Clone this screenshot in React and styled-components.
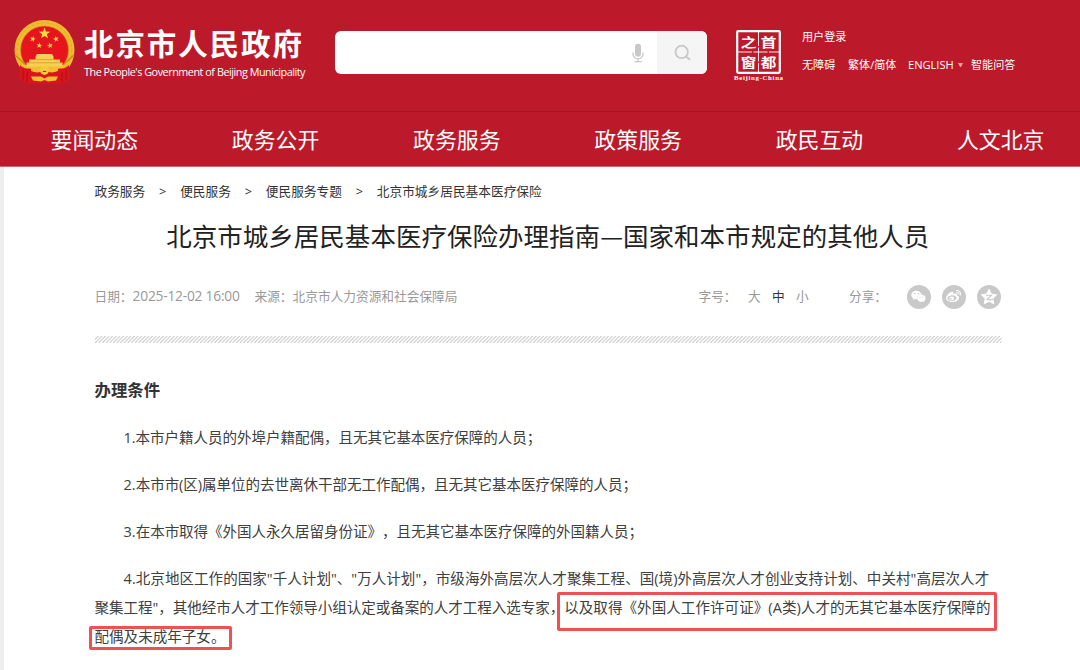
import React from "react";
import styled, { createGlobalStyle } from "styled-components";
import { FaWeixin, FaWeibo } from "react-icons/fa";

const Global = createGlobalStyle`
  * { box-sizing: border-box; }
  body {
    margin: 0;
    background: #fff;
    font-family: "Open Sans", "Noto Sans CJK SC", sans-serif;
    color: #333;
    overflow: hidden;
    text-spacing-trim: space-all;
  }
`;

const Page = styled.div`
  width: 1080px;
  height: 670px;
  overflow: hidden;
  display: flex;
  flex-direction: column;
`;

const Header = styled.header`
  height: 111px;
  background: #bc1a2b;
  display: flex;
  align-items: flex-start;
  padding-left: 14px;
  flex: none;
  color: #fff;
`;

const EmblemSvg = styled.svg`
  width: 61px;
  height: 66px;
  margin-top: 18px;
  flex: none;
`;

const Brand = styled.div`
  width: 260px;
  flex: none;
  padding: 22px 0 0 9px;
  display: flex;
  flex-direction: column;
  white-space: nowrap;
`;

const BrandName = styled.div`
  font: 700 29.5px/40px "Noto Sans CJK SC", sans-serif;
  letter-spacing: 1.9px;
`;

const BrandSub = styled.div`
  margin-top: 2px;
  font-size: 10.8px;
  line-height: 16px;
  letter-spacing: -0.46px;
`;

const SearchBox = styled.div`
  width: 372px;
  height: 43px;
  margin-top: 31px;
  border-radius: 6px;
  background: #fff;
  display: flex;
  justify-content: flex-end;
  align-items: center;
  overflow: hidden;
  flex: none;
`;

const MicIcon = styled.svg`
  width: 12px;
  height: 20px;
  margin-right: 13px;
`;

const SearchButton = styled.div`
  width: 50px;
  height: 43px;
  background: #f5f5f5;
  display: flex;
  align-items: center;
  justify-content: center;
`;

const Stamp = styled.svg`
  width: 52px;
  height: 56px;
  margin: 28px 0 0 26px;
  flex: none;
`;

const Links = styled.div`
  margin: 27px 0 0 17px;
  display: flex;
  flex-direction: column;
  gap: 8px;
`;

const LinkRow = styled.div`
  display: flex;
  height: 20px;
  align-items: center;
`;

const TopLink = styled.span`
  width: ${(p) => p.$w}px;
  font-size: 11.1px;
  line-height: 20px;
  white-space: nowrap;
`;

const Caret = styled.i`
  width: 5px;
  height: 0;
  border: 2.5px solid transparent;
  border-top: 4px solid #e8a58f;
  border-bottom: 0;
  margin-right: 8px;
`;

const Nav = styled.nav`
  height: 56px;
  flex: none;
  background: #bc1a2b;
  border-top: 1px solid #9f1522;
  border-bottom: 1px solid #cf6570;
  display: flex;
  gap: 93.6px;
  padding-left: 50.5px;
`;

const NavItem = styled.span`
  flex: none;
  width: 87.7px;
  color: #fff;
  font: 400 21.9px/54px "Noto Sans CJK SC", sans-serif;
  white-space: nowrap;
`;

const Main = styled.main`
  flex: 1;
  border-left: 4px solid #eee;
  padding: 14px 79px 0 90.5px;
  display: flex;
  flex-direction: column;
`;

const Crumbs = styled.div`
  display: flex;
  height: 20px;
  font-size: 12.7px;
  line-height: 20px;
  white-space: nowrap;
`;

const CrumbSep = styled.span`
  width: 34.9px;
  text-align: center;
`;

const Title = styled.h1`
  margin: 14px 0 0;
  height: 40px;
  text-align: center;
  font: 400 25.5px/40px "Noto Sans CJK SC", sans-serif;
  letter-spacing: 0.03px;
  color: #222;
  white-space: nowrap;
`;

const Meta = styled.div`
  margin-top: 26px;
  height: 30px;
  display: flex;
  align-items: center;
  font-size: 12.7px;
  line-height: 30px;
  color: #999;
  white-space: nowrap;
`;

const MetaItem = styled.span`
  width: ${(p) => p.$w}px;
  height: 30px;
  flex: none;
  color: ${(p) => (p.$on ? "#333" : "#999")};
`;

const DateValue = styled.span`
  font-size: 13.8px;
  letter-spacing: -0.23px;
`;

const Share = styled.span`
  width: 24px;
  height: 24px;
  flex: none;
  margin: 1px 11.3px 0 0;
  border-radius: 50%;
  background: #c9c9c9;
  color: #fff;
  display: flex;
  align-items: center;
  justify-content: center;
`;

const Hatch = styled.svg`
  margin-top: 25px;
  width: 907px;
  height: 7px;
  flex: none;
`;

const Article = styled.article`
  position: relative;
  margin-top: 37px;
  color: #404040;
`;

const Heading = styled.h2`
  margin: 0;
  font-size: 16.4px;
  line-height: 20px;
  font-weight: 700;
  color: #333;
`;

const Para = styled.p`
  margin: ${(p) => p.$mt || 18}px 0 0;
`;

const Line = styled.span`
  display: block;
  height: 29.1px;
  font-size: 14.55px;
  line-height: 29.1px;
  white-space: nowrap;
  padding-left: ${(p) => (p.$indent ? 29.1 : 0)}px;
  letter-spacing: ${(p) => p.$ls || 0}px;
`;

const Lead = styled.span`
  letter-spacing: -0.05px;
`;

const Highlight = styled.div`
  position: absolute;
  left: ${(p) => p.$x}px;
  top: ${(p) => p.$y}px;
  width: ${(p) => p.$w}px;
  height: ${(p) => p.$h}px;
  border: ${(p) => p.$b}px solid #f05053;
  border-radius: 2px;
`;

function star(cx, cy, r, rot = 0, k = 0.4) {
  const pts = [];
  for (let i = 0; i < 10; i++) {
    const a = ((rot - 90 + i * 36) * Math.PI) / 180;
    const q = i % 2 ? r * k : r;
    pts.push(`${(cx + q * Math.cos(a)).toFixed(2)},${(cy + q * Math.sin(a)).toFixed(2)}`);
  }
  return pts.join(" ");
}

function Emblem() {
  return (
    <EmblemSvg viewBox="0 0 61 66">
      <circle cx="30.5" cy="32" r="30" fill="#efbb30" />
      <circle cx="30.5" cy="32" r="27.3" fill="none" stroke="#dda526" strokeWidth=".8" strokeDasharray="3 2" />
      <circle cx="30.5" cy="32" r="24" fill="#e6141c" stroke="#d8961b" strokeWidth=".6" />
      <path d="M10 47h41l-3 8H13z" fill="#f2bf2f" />
      <path d="M1 37l11 10M60 37l-11 10" stroke="#c98618" strokeWidth="1.2" />
      <polygon points={star(30.5, 15.5, 6)} fill="#fbd93f" />
      <polygon points={star(18.8, 21, 3.1, 15)} fill="#fbd93f" />
      <polygon points={star(42, 21, 3.1, -15)} fill="#fbd93f" />
      <polygon points={star(25.3, 27.5, 3.1, 10)} fill="#fbd93f" />
      <polygon points={star(36, 27.5, 3.1, -10)} fill="#fbd93f" />
      <path d="M23 36h15l1.500 2.500h-18zM21.500 38.500h18v3h-18zM15 41.500h31v3H15zM12.500 44.500h36v4h-36z" fill="#f6cf55" />
      <path d="M22 41.600h17M14 44.800h33" stroke="#d9901f" strokeWidth=".7" />
      <path d="M6 47c4 5 10 3 14 4h21c4-1 10 1 14-4l1 14-8 4.500H13l-8-4.500z" fill="#d9141d" />
      <path d="M17 50q8-2.500 10 1h7q2-3.500 10-1v3q-6 2.500-10 .5h-7q-4 2-10-.5z" fill="#f2bf2f" />
      <circle cx="30.500" cy="52.500" r="4.400" fill="#f7c93c" />
      <path d="M28.500 54a2.300 2.300 0 0 1 4 0z" fill="#d9141d" />
      <path d="M17 58.500h10l3.500 2 3.500-2h10l-2 4-8 1-3.500-1.500-3.500 1.500-8-1z" fill="#f2bf2f" />
      <path d="M9 52v10M13 54v10M48 54v10M52 52v10" stroke="#a90d17" strokeWidth=".9" />
    </EmblemSvg>
  );
}

const STAMP_CHARS = [
  ["之", 15.5, 18.8],
  ["首", 35.6, 18.8],
  ["窗", 15.5, 38.8],
  ["都", 35.6, 38.8],
];

function CapitalWindow() {
  return (
    <Stamp viewBox="0 0 52 56">
      <rect x="4.200" y="3.200" width="42.600" height="41.600" rx="1" fill="none" stroke="#fff" strokeWidth="2.200" />
      <path d="M25.500 4v40M5 24h41" stroke="#fff" strokeWidth=".9" strokeDasharray="14 1.500" />
      {STAMP_CHARS.map(([c, x, y]) => (
        <text
          key={c}
          transform={`translate(${x} ${y}) scale(1.2 1)`}
          fill="#fff"
          fontFamily='"Noto Sans CJK SC", sans-serif'
          fontWeight="700"
          fontSize="13"
          textAnchor="middle"
        >
          {c}
        </text>
      ))}
      <text x="25.500" y="52" fill="#fff" textAnchor="middle" fontFamily='"Liberation Serif", serif' fontWeight="700" fontSize="6.800" textLength="49">
        Beijing-China
      </text>
    </Stamp>
  );
}

const NAV = ["要闻动态", "政务公开", "政务服务", "政策服务", "政民互动", "人文北京"];
const CRUMBS = ["政务服务", "便民服务", "便民服务专题", "北京市城乡居民基本医疗保险"];

export default function App() {
  return (
    <Page>
      <Global />
      <Header>
        <Emblem />
        <Brand>
          <BrandName>北京市人民政府</BrandName>
          <BrandSub>The People's Government of Beijing Municipality</BrandSub>
        </Brand>
        <SearchBox>
          <MicIcon viewBox="0 0 12 20">
            <rect x="3" y="0.800" width="6" height="13" rx="3" fill="#c8c8c8" />
            <path d="M1 9.500v1.500a5 4.800 0 0 0 10 0V9.500M6 16v2.500M2.300 18.600h7.400" fill="none" stroke="#c8c8c8" strokeWidth="1.300" />
          </MicIcon>
          <SearchButton>
            <svg width="17" height="17" viewBox="0 0 17 17" fill="none" stroke="#c8c8c8" strokeWidth="1.800">
              <circle cx="7.700" cy="7.900" r="6.200" />
              <path d="M12 12.500l3.500 2.800" strokeLinecap="round" />
            </svg>
          </SearchButton>
        </SearchBox>
        <CapitalWindow />
        <Links>
          <LinkRow>
            <TopLink $w={60}>用户登录</TopLink>
          </LinkRow>
          <LinkRow>
            <TopLink $w={46}>无障碍</TopLink>
            <TopLink $w={60}>繁体/简体</TopLink>
            <TopLink $w={50}>ENGLISH</TopLink>
            <Caret />
            <TopLink $w={46}>智能问答</TopLink>
          </LinkRow>
        </Links>
      </Header>
      <Nav>
        {NAV.map((t) => (
          <NavItem key={t}>{t}</NavItem>
        ))}
      </Nav>
      <Main>
        <Crumbs>
          {CRUMBS.map((t, i) => (
            <React.Fragment key={t}>
              {i > 0 && <CrumbSep>&gt;</CrumbSep>}
              <span>{t}</span>
            </React.Fragment>
          ))}
        </Crumbs>
        <Title>北京市城乡居民基本医疗保险办理指南—国家和本市规定的其他人员</Title>
        <Meta>
          <MetaItem $w={160}>
            日期：<DateValue>2025-12-02 16:00</DateValue>
          </MetaItem>
          <MetaItem $w={444}>来源：北京市人力资源和社会保障局</MetaItem>
          <MetaItem $w={49.5}>字号：</MetaItem>
          <MetaItem $w={24}>大</MetaItem>
          <MetaItem $w={24} $on>中</MetaItem>
          <MetaItem $w={53}>小</MetaItem>
          <MetaItem $w={57.5}>分享：</MetaItem>
          <Share>
            <FaWeixin size={15} />
          </Share>
          <Share>
            <FaWeibo size={15} />
          </Share>
          <Share>
            <svg width="18" height="18" viewBox="0 0 18 18">
              <polygon points={star(9, 9.3, 8, 0, 0.5)} fill="#fff" stroke="#fff" strokeLinejoin="round" />
              <path d="M6 7.300h5.500L7 11.500q3 .8 6-.2" fill="none" stroke="#c9c9c9" strokeWidth="1.100" />
            </svg>
          </Share>
        </Meta>
        <Hatch>
          <defs>
            <pattern id="hatch" width="3.620" height="7" patternUnits="userSpaceOnUse">
              <path d="M-7.240 7l7-7M-3.620 7l7-7M0 7l7-7" stroke="#c4c4c4" strokeWidth="1" />
            </pattern>
          </defs>
          <rect width="906.500" height="7" fill="url(#hatch)" />
        </Hatch>
        <Article>
          <Heading>办理条件</Heading>
          <Para $mt={22.5}>
            <Line $indent $ls={-0.06}>1.本市户籍人员的外埠户籍配偶，且无其它基本医疗保障的人员；</Line>
          </Para>
          <Para>
            <Line $indent $ls={-0.05}>2.本市市(区)属单位的去世离休干部无工作配偶，且无其它基本医疗保障的人员；</Line>
          </Para>
          <Para>
            <Line $indent $ls={-0.05}>3.在本市取得《外国人永久居留身份证》，且无其它基本医疗保障的外国籍人员；</Line>
          </Para>
          <Para>
            <Line $indent $ls={0.02}>4.北京地区工作的国家"千人计划"、"万人计划"，市级海外高层次人才聚集工程、国(境)外高层次人才创业支持计划、中关村"高层次人才</Line>
            <Line $ls={0.04}>
              <Lead>聚集工程"，其他经市人才工作领导小组认定或备案的人才工程入选专家，</Lead>
              以及取得《外国人工作许可证》(A类)人才的无其它基本医疗保障的
            </Line>
            <Line>配偶及未成年子女。</Line>
          </Para>
          <Highlight $x={462.5} $y={212} $w={440} $h={39} $b={3.5} />
          <Highlight $x={-5.5} $y={246} $w={143} $h={24} $b={3} />
        </Article>
      </Main>
    </Page>
  );
}
